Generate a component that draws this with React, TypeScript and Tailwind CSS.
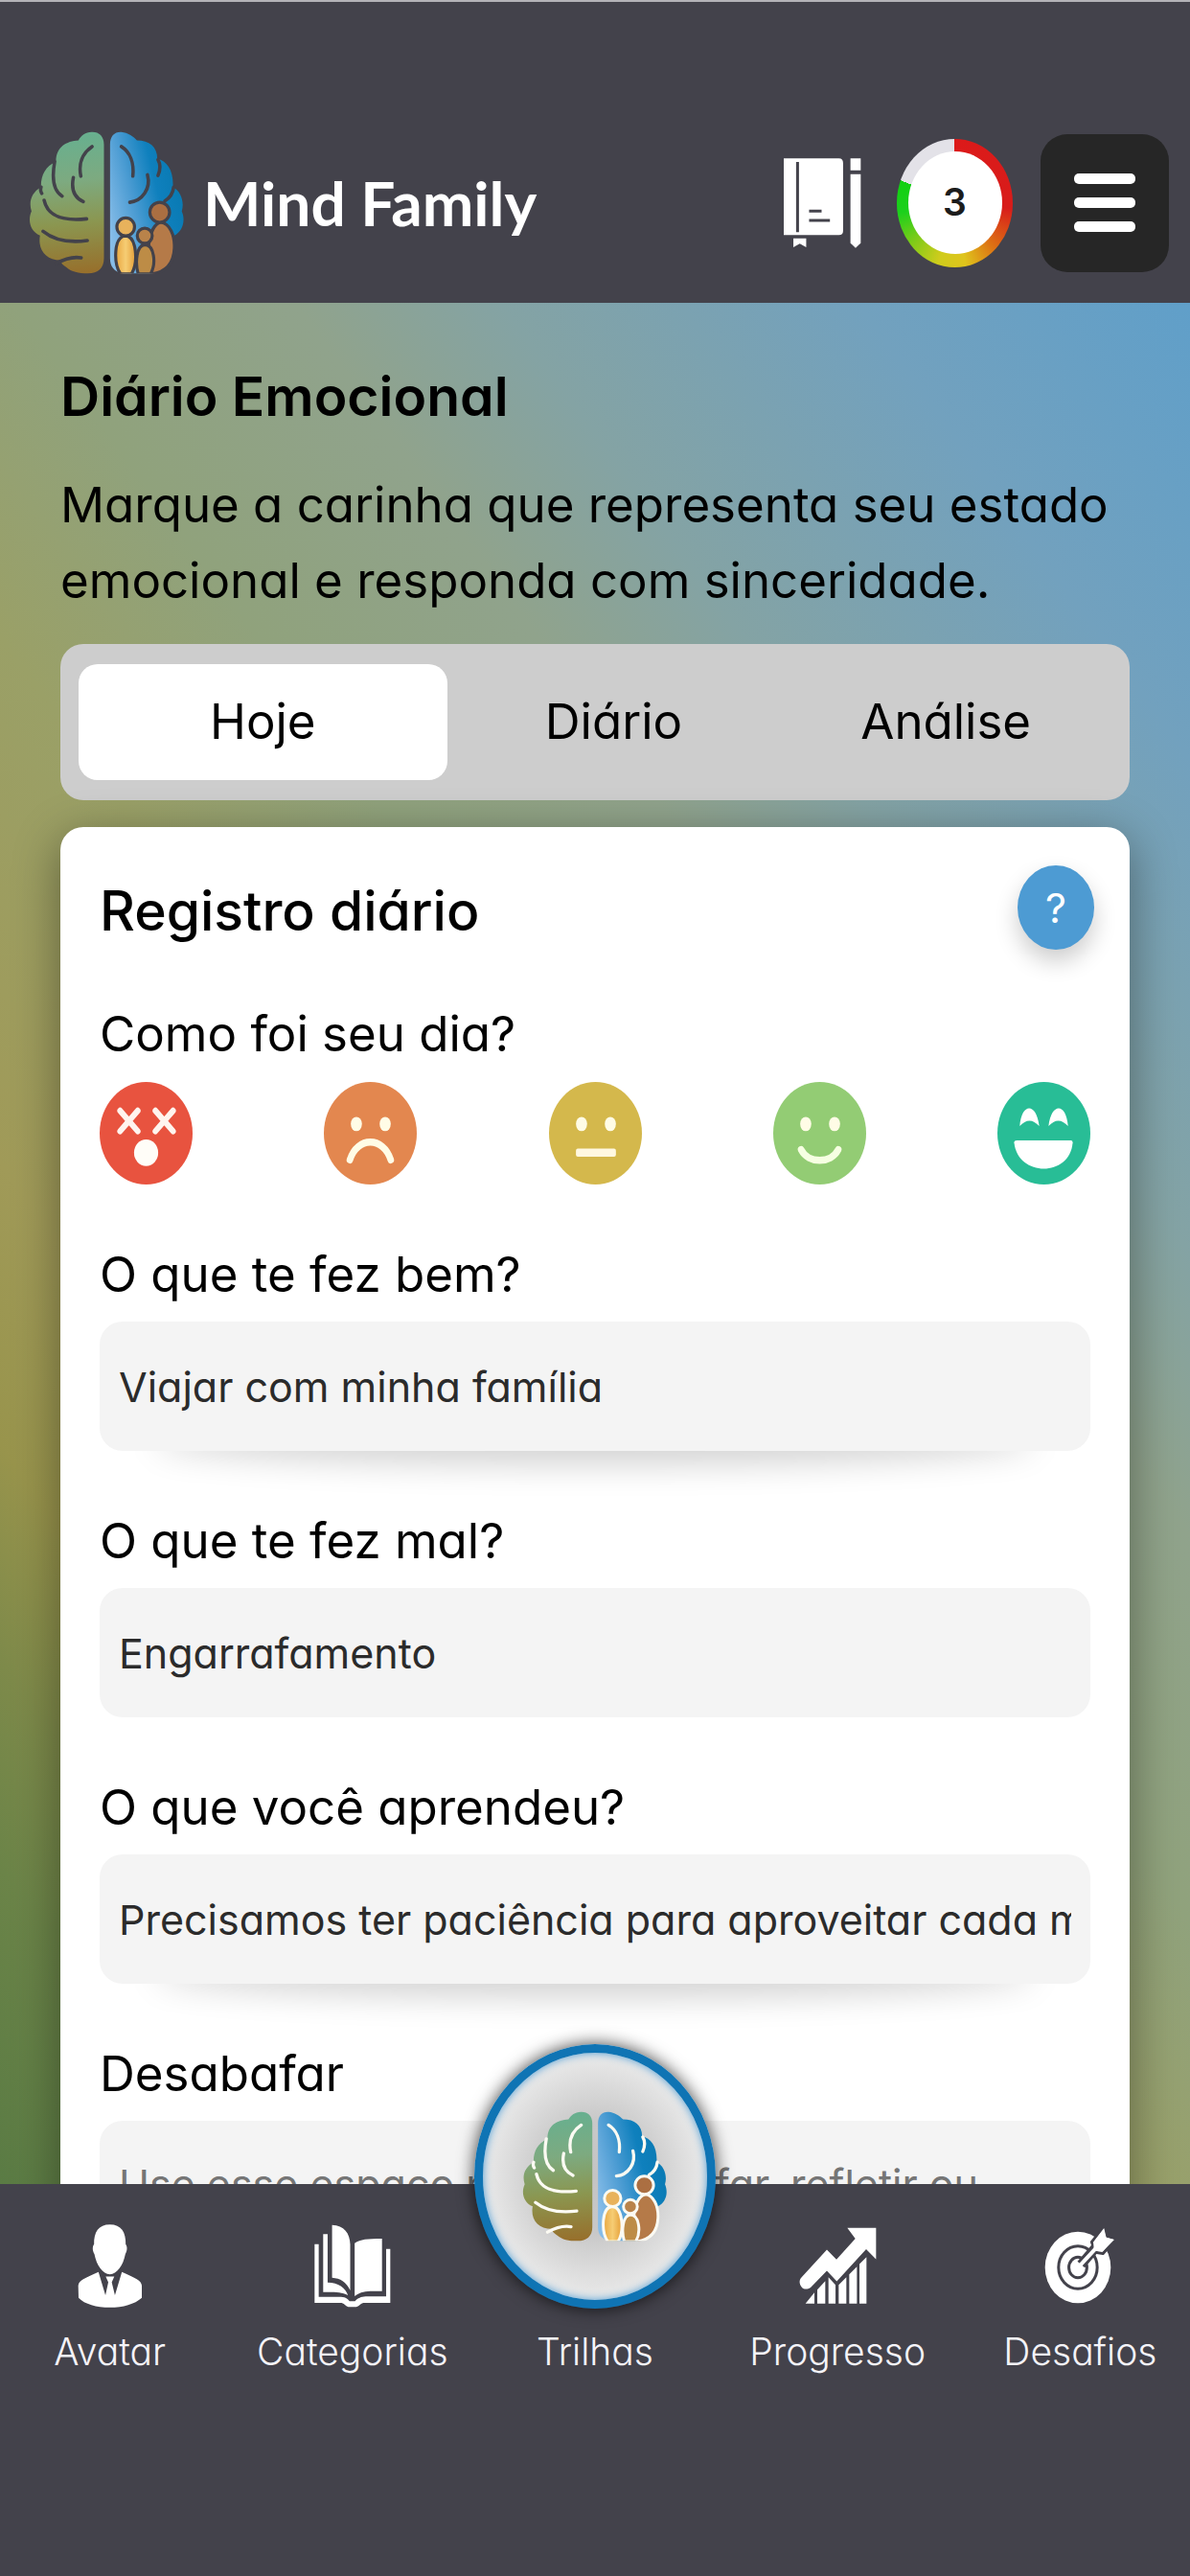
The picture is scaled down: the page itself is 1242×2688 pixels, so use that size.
import { useId, useState } from "react";
import type { ReactNode } from "react";

function Brain({ line, className }: { line: string; className: string }) {
  const id = useId().replace(/[^a-zA-Z0-9]/g, "");
  return (
    <svg viewBox="255 305 465 420" preserveAspectRatio="none" className={className} aria-hidden="true">
      <defs>
        <linearGradient id={id + "l"} x1="0.5" y1="0" x2="0.55" y2="1">
          <stop offset="0" stopColor="#66b090" />
          <stop offset="0.35" stopColor="#7daa80" />
          <stop offset="0.65" stopColor="#8b9650" />
          <stop offset="1" stopColor="#97702c" />
        </linearGradient>
        <linearGradient id={id + "r"} x1="0" y1="0.7" x2="0.85" y2="0.3">
          <stop offset="0" stopColor="#86bce8" />
          <stop offset="0.4" stopColor="#4a9bd2" />
          <stop offset="0.75" stopColor="#0f80bd" />
          <stop offset="1" stopColor="#0a7bb5" />
        </linearGradient>
        <linearGradient id={id + "y"} x1="0" y1="0" x2="1" y2="0">
          <stop offset="0" stopColor="#e9a63f" />
          <stop offset="0.5" stopColor="#f6cd74" />
          <stop offset="1" stopColor="#e59f38" />
        </linearGradient>
        <clipPath id={id + "c"}>
          <rect x="499" y="305" width="221" height="415" />
        </clipPath>
      </defs>
      <path
        fill={`url(#${id}l)`}
        d="M479 346C479 322 464 309 443 310C424 311 412 320 404 334C368 336 337 354 338 396C306 410 293 436 294 470C266 486 257 512 266 540C254 566 262 598 291 610C284 650 306 682 352 682C352 690 360 698 368 702C384 716 404 720 432 720C462 720 479 704 479 676Z"
      />
      <path
        fill={`url(#${id}r)`}
        d="M497 346C497 322 510 309 530 310C550 312 564 322 576 334C612 334 636 352 636 388C664 394 684 420 682 470C706 482 716 514 708 540C720 568 710 598 686 610C686 660 670 712 620 720H534C508 714 497 700 497 676Z"
      />
      <g fill="none" stroke={line} strokeWidth="10" strokeLinecap="round">
        <path d="M334 396C326 440 330 480 356 496M294 470C292 476 292 482 296 488M444 352C414 372 404 404 411 438M389 442C382 476 392 500 418 512M303 508C312 550 348 570 428 562M300 598C332 624 376 632 430 625M338 692C356 682 384 670 412 675" />
        <path d="M530 352C556 368 568 400 564 438M607 434C618 474 592 510 555 514M638 390C646 404 645 420 638 436M684 470C682 488 672 502 658 510" />
      </g>
      <g stroke={line} strokeWidth="9" clipPath={`url(#${id}c)`}>
        <path d="M620 722C600 690 606 580 646 572C672 574 688 610 686 648C684 690 662 716 620 722Z" fill="#b57a48" />
        <circle cx="643" cy="543" r="29" fill="#ab6f42" />
        <path d="M580 722C570 690 574 638 600 637C626 638 634 690 616 722Z" fill="#bd8c46" />
        <circle cx="599" cy="611" r="22" fill="#b9834a" />
        <path d="M528 722C506 690 508 612 542 611C576 612 580 690 560 722Z" fill={`url(#${id}y)`} />
        <circle cx="543" cy="585" r="26" fill="#e8b25c" />
      </g>
    </svg>
  );
}

function DiaryIcon() {
  return (
    <svg viewBox="115 162 248 284" preserveAspectRatio="none" className="h-[95px] w-[83px] text-white" aria-hidden="true">
      <path fill="currentColor" d="M118 166H290Q303 166 303 180V392Q303 405 290 405H118ZM148 415H188V443L168 432L148 443ZM326 166H358V203H326ZM326 215H358V430L342 445L326 430Z" />
      <path fill="none" stroke="#43424b" strokeWidth="9" d="M161 177V396M197 330H236M197 359H262" />
    </svg>
  );
}

function AvatarIcon() {
  return (
    <svg viewBox="240 241 206 260" preserveAspectRatio="none" className="h-[87px] w-[68px]" fill="currentColor" aria-hidden="true">
      <path d="M342 242C378 242 393 266 392 304C398 310 397 324 391 334C384 370 364 397 342 397C320 397 300 370 293 334C287 324 286 310 292 304C291 266 306 242 342 242Z" />
      <path d="M242 432C244 416 262 410 306 390L328 462L337 422L329 404H356L348 422L358 462L380 390C424 410 441 416 443 432V470C420 490 384 500 342 500C300 500 262 490 243 470Z" />
    </svg>
  );
}

function BooksIcon() {
  return (
    <svg viewBox="984 241 241 261" preserveAspectRatio="none" className="h-[87px] w-[80px]" fill="currentColor" aria-hidden="true">
      <path d="M1040 243C1078 245 1096 268 1097 304V448C1084 420 1066 410 1040 408Z" />
      <path d="M1111 300C1130 288 1150 286 1197 286V450H1160C1138 451 1122 456 1111 466Z" />
      <path d="M1012 272H1026V423C1060 423 1082 440 1090 463C1068 452 1050 453 1012 453Z" />
      <path d="M985 303H998V468H1062C1080 468 1088 472 1095 482H1112C1122 472 1130 468 1146 467H1210V318H1223V487H1138C1128 490 1124 500 1112 500H1095C1084 500 1080 490 1070 487H985Z" />
    </svg>
  );
}

function ProgressIcon() {
  return (
    <svg viewBox="286 252 243 239" preserveAspectRatio="none" className="h-[80px] w-[81px]" fill="currentColor" aria-hidden="true">
      <path d="M294 408L373 322L403 353L462 288L437 254H527V352L496 321L404 421L373 388L322 440C306 450 292 444 288 426C287 418 289 413 294 408Z" />
      <path d="M306 490L334 456V490ZM343 447L368 420V490H343ZM378 408L400 432V490H378ZM410 432L434 408V490H410ZM443 399L467 375V490H443ZM475 367L497 345V490H475Z" />
    </svg>
  );
}

function TargetIcon() {
  return (
    <svg viewBox="1058 254 220 238" preserveAspectRatio="none" className="h-[80px] w-[74px]" aria-hidden="true">
      <ellipse cx="1162" cy="379" rx="102" ry="111" fill="currentColor" />
      <g fill="none" stroke="#43424b" strokeWidth="9">
        <ellipse cx="1162" cy="379" rx="60" ry="66" />
        <ellipse cx="1162" cy="379" rx="28" ry="32" />
      </g>
      <path fill="none" stroke="#43424b" strokeWidth="30" d="M1172 370L1246 284" />
      <path fill="currentColor" stroke="#43424b" strokeWidth="9" strokeLinejoin="round" d="M1205 300L1245 250L1252 282L1280 290L1240 336L1216 332Z" />
      <path fill="none" stroke="currentColor" strokeWidth="12" strokeLinecap="round" d="M1164 378L1232 304" />
      <path fill="currentColor" d="M1210 300L1243 257L1250 286L1275 293L1238 330L1212 328Z" />
    </svg>
  );
}

type Mood = { name: string; color: string; art: ReactNode };

const dots = (
  <>
    <ellipse cx="35" cy="41" rx="6" ry="7" fill="#fffce6" />
    <ellipse cx="66" cy="41" rx="6" ry="7" fill="#fffce6" />
  </>
);

const moods: Mood[] = [
  {
    name: "Péssimo",
    color: "#e8533f",
    art: (
      <>
        <path d="M22 28L41 48M41 28L22 48M60 28L79 48M79 28L60 48" stroke="#fff4ee" strokeWidth="6" strokeLinecap="round" />
        <ellipse cx="50" cy="69" rx="13" ry="13" fill="#fffdf8" />
      </>
    ),
  },
  {
    name: "Ruim",
    color: "#e3874f",
    art: (
      <>
        {dots}
        <path d="M28 76C36 53 64 53 72 76" fill="none" stroke="#fffce6" strokeWidth="7" strokeLinecap="round" />
      </>
    ),
  },
  {
    name: "Neutro",
    color: "#d4b84c",
    art: (
      <>
        {dots}
        <rect x="29" y="65" width="43" height="8" rx="2" fill="#fff8e0" />
      </>
    ),
  },
  {
    name: "Bom",
    color: "#93cc74",
    art: (
      <>
        {dots}
        <path d="M30 66C38 80 62 80 70 66" fill="none" stroke="#f6ffe2" strokeWidth="7" strokeLinecap="round" />
      </>
    ),
  },
  {
    name: "Ótimo",
    color: "#28bd96",
    art: (
      <g fill="#ffffff">
        <path d="M24 43C26 20 42 20 45 43C38 36 31 36 24 43ZM55 43C58 20 74 20 76 43C69 36 62 36 55 43Z" />
        <path d="M18 59Q18 57 21 57H79Q81 57 81 59C78 93 22 93 18 59Z" />
      </g>
    ),
  },
];

const tabs = ["Hoje", "Diário", "Análise"];

const fields = [
  { id: "bem", label: "O que te fez bem?", value: "Viajar com minha família", lifted: true },
  { id: "mal", label: "O que te fez mal?", value: "Engarrafamento", lifted: false },
  {
    id: "aprendeu",
    label: "O que você aprendeu?",
    value: "Precisamos ter paciência para aproveitar cada momento",
    lifted: true,
  },
];

function NavItem({ label, children }: { label: string; children?: ReactNode }) {
  return (
    <a href="#" className="flex flex-col items-center text-white">
      <span className="flex h-[88px] items-center justify-center">{children}</span>
      <span className="mt-4 text-[39px] leading-[60px] font-light text-[#f4f3f8]">{label}</span>
    </a>
  );
}

export default function App() {
  const [tab, setTab] = useState("Hoje");
  const [mood, setMood] = useState("");

  return (
    <div className="flex h-screen flex-col overflow-hidden bg-[#43424b] font-['Inter','Open_Sans',sans-serif] text-black [font-feature-settings:'cv11']">
      <header className="flex shrink-0 items-center justify-between border-t-2 border-[#b4b3b8] pt-[134px] pr-[22px] pb-[29px] pl-[29px]">
        <a href="#" className="flex items-center gap-[18px] text-white">
          <Brain line="#43424b" className="h-[151px] w-[165px]" />
          <span className="font-['Lato',sans-serif] text-[64px] leading-[88px] font-bold">Mind Family</span>
        </a>
        <div className="flex items-center">
          <a href="#" aria-label="Diário" className="mr-9">
            <DiaryIcon />
          </a>
          <div className="mr-[29px] flex h-[134px] w-[121px] items-center justify-center rounded-[50%] bg-[conic-gradient(#dc1a1a_0deg,#d81c1a_95deg,#dd7414_140deg,#dfc41c_170deg,#d0cc1c_195deg,#7ccb18_228deg,#1cd01c_260deg,#12d012_293deg,#e3e2e8_293deg)]">
            <div className="flex h-[107px] w-[98px] items-center justify-center rounded-[50%] bg-white text-[39px] font-semibold text-[#1c1c1c]">3</div>
          </div>
          <button type="button" aria-label="Menu" className="flex h-[144px] w-[134px] flex-col items-center justify-center gap-[14px] rounded-[28px] bg-[#262626]">
            <span className="h-[11px] w-16 rounded-[5px] bg-white" />
            <span className="h-[11px] w-16 rounded-[5px] bg-white" />
            <span className="h-[11px] w-16 rounded-[5px] bg-white" />
          </button>
        </div>
      </header>

      <main className="min-h-0 flex-1 overflow-hidden bg-[linear-gradient(54deg,#5a7b44_0%,#6b8448_9%,#7e8a4a_15%,#98944c_21%,#a09a58_29%,#9aa067_44%,#90a27c_54%,#90a38c_65%,#84a3a4_73%,#72a1be_87%,#609fc9_100%)] px-[63px] pt-[60px]">
        <h1 className="text-[57px] leading-[76px] font-semibold">Diário Emocional</h1>
        <p className="mt-[35px] text-[51px] leading-[79px]">Marque a carinha que representa seu estado emocional e responda com sinceridade.</p>

        <div role="tablist" className="mt-[27px] grid grid-cols-[385fr_348fr_346fr] rounded-3xl bg-[#cdcdcd] px-[19px] py-[21px]">
          {tabs.map((t) => (
            <button
              key={t}
              type="button"
              role="tab"
              aria-selected={t === tab}
              onClick={() => setTab(t)}
              className={t === tab ? "h-[121px] rounded-[20px] bg-white text-[51px]" : "h-[121px] rounded-[20px] text-[51px]"}
            >
              {t}
            </button>
          ))}
        </div>

        <section className="mt-7 rounded-t-3xl bg-white px-[41px] pt-10 pb-24 shadow-[0_12px_48px_rgba(0,0,0,0.4)]">
          <div className="flex items-start justify-between">
            <h2 className="text-[57px] leading-[96px] font-medium">Registro diário</h2>
            <button
              type="button"
              aria-label="Ajuda"
              className="-mr-1 h-[88px] w-20 rounded-[50%] bg-[#4d9bd3] text-[43px] text-white shadow-[0_12px_24px_rgba(0,0,0,0.2)]"
            >
              ?
            </button>
          </div>

          <h3 className="mt-10 text-[51px] leading-[80px]">Como foi seu dia?</h3>
          <div className="mt-2.5 flex justify-between">
            {moods.map((m) => (
              <button key={m.name} type="button" aria-label={m.name} aria-pressed={m.name === mood} onClick={() => setMood(m.name)}>
                <svg viewBox="0 0 100 100" preserveAspectRatio="none" className="h-[107px] w-[97px]" aria-hidden="true">
                  <circle cx="50" cy="50" r="50" fill={m.color} />
                  {m.art}
                </svg>
              </button>
            ))}
          </div>

          <div className="mt-[54px] flex flex-col gap-[54px]">
            {fields.map((f) => (
              <div key={f.id} className="flex flex-col gap-[9px]">
                <label htmlFor={f.id} className="text-[51px] leading-[80px]">
                  {f.label}
                </label>
                <div className="relative">
                  {f.lifted && <div className="absolute inset-x-16 bottom-2 h-8 rounded-[50%] shadow-[0_14px_34px_8px_rgba(0,0,0,0.18)]" />}
                  <input
                    id={f.id}
                    defaultValue={f.value}
                    className="relative block h-[135px] w-full rounded-3xl bg-[#f4f4f4] px-5 text-[43px] text-[#2b2b2b] outline-none"
                  />
                </div>
              </div>
            ))}
            <div className="flex flex-col gap-[9px]">
              <label htmlFor="desabafar" className="text-[51px] leading-[80px]">
                Desabafar
              </label>
              <textarea
                id="desabafar"
                rows={4}
                placeholder="Use esse espaço para desabafar, refletir ou relaxar"
                className="block w-full resize-none rounded-3xl bg-[#f4f4f4] px-5 pt-[34px] text-[43px] leading-[64px] outline-none placeholder:text-[#757575]"
              />
            </div>
          </div>
        </section>
      </main>

      <nav className="relative shrink-0 bg-[#43424b] pt-[41px] pb-[204px]">
        <div className="-mx-3 grid grid-cols-5">
          <NavItem label="Avatar">
            <AvatarIcon />
          </NavItem>
          <NavItem label="Categorias">
            <BooksIcon />
          </NavItem>
          <NavItem label="Trilhas" />
          <NavItem label="Progresso">
            <ProgressIcon />
          </NavItem>
          <NavItem label="Desafios">
            <TargetIcon />
          </NavItem>
        </div>
        <button
          type="button"
          aria-label="Trilhas"
          className="absolute -top-[146px] left-1/2 flex h-[276px] w-[252px] -translate-x-1/2 items-center justify-center rounded-[50%] border-[9px] border-[#0f74b4] bg-[radial-gradient(closest-side,#c4c4c4_0%,#c8c8c8_45%,#dedede_80%,#eaeaea_100%)] shadow-[0_0_18px_rgba(0,0,0,0.75),inset_0_0_10px_#4d9bd3]"
        >
          <Brain line="#fbfaf2" className="h-[138px] w-[154px]" />
        </button>
      </nav>
    </div>
  );
}
